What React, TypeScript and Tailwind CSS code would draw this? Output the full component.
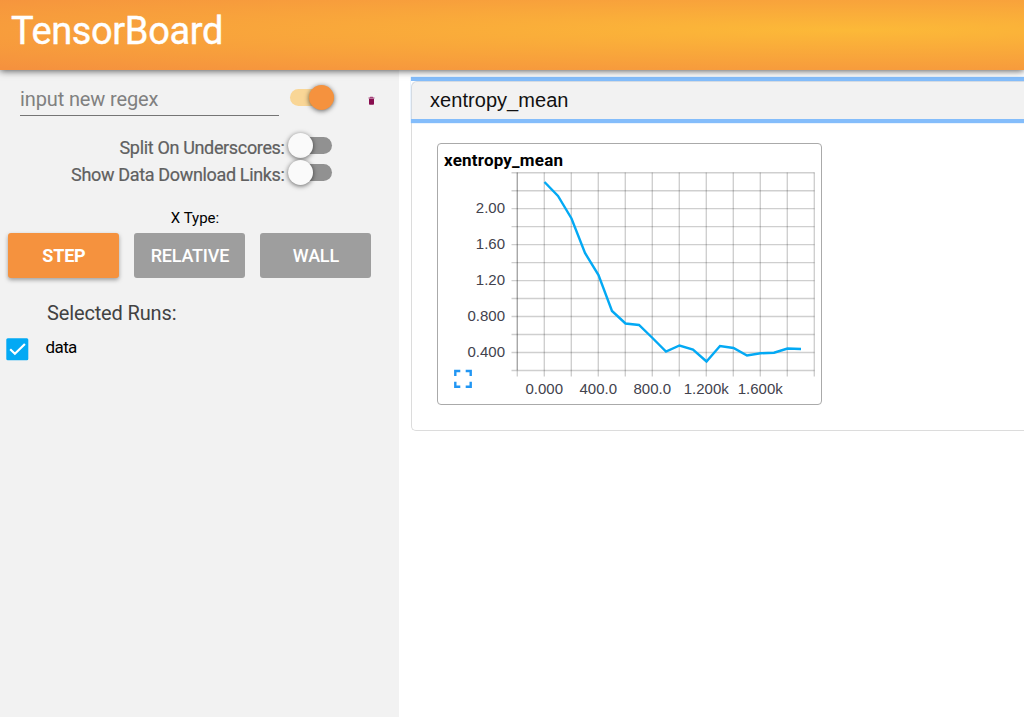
import React from 'react';

const points = [
  [544.5, 182], [558, 196], [571.5, 218.5], [585, 253], [598.5, 275], [612, 311],
  [625.5, 323.5], [639, 325], [652.5, 338], [666, 351.5], [679.5, 345.5], [693, 349.5],
  [706.5, 361.5], [720, 346], [733.5, 348], [747, 355.5], [760.5, 353.3], [774, 352.7],
  [787.5, 348.5], [801, 349],
];

const yTicks = ['2.00', '1.60', '1.20', '0.800', '0.400'];
const xTicks = ['0.000', '400.0', '800.0', '1.200k', '1.600k'];

const Toggle = ({ checked = false }: { checked?: boolean }) => (
  <button
    role="switch"
    aria-checked={checked}
    className={`flex h-[17px] w-[44px] items-center rounded-full ${
      checked ? 'justify-end bg-[#f9d696]' : 'justify-start bg-[#919191]'
    }`}
  >
    <span
      className={`size-[25px] shrink-0 rounded-full shadow-[0_1px_5px_rgba(0,0,0,0.6)] ${
        checked ? 'bg-[#f5923e]' : 'bg-[#fafafa]'
      }`}
    />
  </button>
);

const Option = ({ label }: { label: string }) => (
  <div className="flex h-[27.3px] items-center">
    <span className="w-[284.6px] pt-[4px] text-right text-[18px] leading-[22px] tracking-[-0.34px] text-[#606060] [-webkit-text-stroke:0.2px_#606060]">
      {label}
    </span>
    <span className="ml-[3.9px] pb-px">
      <Toggle />
    </span>
  </div>
);

const Sidebar = () => (
  <aside className="w-[398.5px] shrink-0 bg-[#f2f2f2]">
    <div className="flex h-[63px] pt-[14px] pl-[20px]">
      <div className="h-[32px] w-[259px] border-b border-[#757575] pt-[3px] text-[20px] leading-[24px] tracking-[-0.13px] text-[#808080]">
        input new regex
      </div>
      <div className="ml-[11px] pt-[5px]">
        <Toggle checked />
      </div>
      <svg className="mt-[12px] ml-[34px]" width="7" height="9" viewBox="0 0 7 9">
        <path d="M2.2 0.8h2.6l.4.7h1.3v1H.5v-1h1.3z" fill="#a34179" />
        <path d="M1 2.8h5v4.9q0 1-.8 1H1.8Q1 8.7 1 7.7z" fill="#880e4f" />
      </svg>
    </div>

    <Option label="Split On Underscores:" />
    <Option label="Show Data Download Links:" />

    <div className="mt-[22.4px] w-[390px] text-center text-[15px] leading-[18px] text-black">X Type:</div>
    <div className="mt-[6px] flex gap-[15px] pl-[8.4px] text-[18px] font-medium tracking-[-0.2px] text-white">
      <button className="h-[44.5px] w-[111px] rounded-[3px] bg-[#f5923e] font-bold shadow-[0_2px_4px_rgba(0,0,0,0.35)]">STEP</button>
      <button className="h-[44.5px] w-[111px] rounded-[3px] bg-[#9e9e9e]">RELATIVE</button>
      <button className="h-[44.5px] w-[111px] rounded-[3px] bg-[#9e9e9e]">WALL</button>
    </div>

    <div className="mt-[23px] pl-[47px] text-[20px] leading-[24px] tracking-[-0.14px] text-[#424242]">Selected Runs:</div>
    <label className="mt-[12.5px] flex items-center pl-[6px]">
      <svg width="23" height="23" viewBox="0 0 23 23">
        <rect x="0.3" y="0.3" width="22" height="22" rx="1.5" fill="#03a9f4" />
        <path d="M4.2 11.2l4.7 4.6 10-9.8" fill="none" stroke="#fff" strokeWidth="2.2" />
      </svg>
      <span className="ml-[16.5px] pb-[5px] text-[17px] leading-[20px] tracking-[-0.6px] text-black">data</span>
    </label>
  </aside>
);

const Chart = () => (
  <svg className="block" width="384" height="260" viewBox="438 144 384 260">
    <g stroke="#000" strokeOpacity="0.19" strokeWidth="1.4">
      {Array.from({ length: 12 }, (_, i) => (
        <line key={i} x1={517.3 + i * 27} x2={517.3 + i * 27} y1="172.5" y2="376.5" />
      ))}
      {Array.from({ length: 12 }, (_, i) => (
        <line key={i} x1="511.5" x2="814.5" y1={172.7 + i * 17.98} y2={172.7 + i * 17.98} />
      ))}
      <line x1="517.3" x2="517.3" y1="172.5" y2="370" />
    </g>
    <polyline points={points.map((p) => p.join(',')).join(' ')} fill="none" stroke="#03a9f4" strokeWidth="2.4" />
    <g fill="#42424d" className="font-['Liberation_Sans',sans-serif] text-[15px]">
      {yTicks.map((t, i) => (
        <text key={t} x="505" y={213 + i * 35.9} textAnchor="end">{t}</text>
      ))}
      {xTicks.map((t, i) => (
        <text key={t} x={544.3 + i * 54} y="394" textAnchor="middle">{t}</text>
      ))}
    </g>
    <path
      d="M455.3 376v-5h5M465.7 371h5v5M470.7 381.8v5h-5M460.3 386.8h-5v-5"
      fill="none"
      stroke="#2196f3"
      strokeWidth="2.4"
    />
    <text x="444" y="166" fill="#000" textLength="119" className="text-[17px] font-bold">xentropy_mean</text>
  </svg>
);

const App = () => {
  return (
    <div className="flex h-[717px] w-[1024px] flex-col overflow-hidden bg-white font-[Roboto,sans-serif]">
      <header className="relative h-[69.5px] shrink-0 bg-[radial-gradient(1202px_54px_at_850px_30px,#fcb938,#f5913e)] pt-[8px] pl-[11px] shadow-[0_1px_7px_rgba(0,0,0,0.65)]">
        <h1 className="text-[38px] leading-[46px] tracking-[-0.38px] text-white [-webkit-text-stroke:0.4px_white]">TensorBoard</h1>
      </header>
      <div className="flex min-h-0 grow">
        <Sidebar />
        <main className="min-w-0 grow pt-[7px] pl-[12.5px]">
          <section className="h-[354px] rounded-bl-[5px] border-b border-l border-[#dcdcdc]">
            <div className="-ml-px h-[46.5px] border-y-4 border-[#84bdfb] bg-white shadow-[0_0_1px_#84bdfb]">
              <div className="h-[38.5px] rounded-tl-[6px] border-t border-l border-[#d4dbe3] bg-[#f2f2f2] pl-[18px] font-['Liberation_Sans',sans-serif] text-[20px] leading-[37px] tracking-[0.05px] text-[#111]">
                xentropy_mean
              </div>
            </div>
            <div className="mt-[20px] ml-[24.9px] h-[262px] w-[385px] rounded-[4px] border border-[#aaa]">
              <Chart />
            </div>
          </section>
        </main>
      </div>
    </div>
  );
};

export default App;
